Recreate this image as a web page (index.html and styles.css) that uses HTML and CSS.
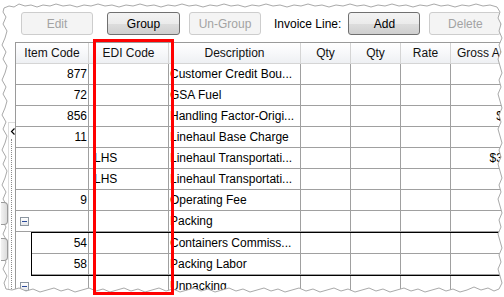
FILE: index.html
```html
<!DOCTYPE html>
<html lang="en">
<head>
    <meta charset="UTF-8">
    <title>Invoice Lines</title>
    <link rel="stylesheet" href="styles.css">
</head>
<body>
    <div class="shot">
        <div class="toolbar">
            <button class="btn btn-edit" disabled>Edit</button>
            <button class="btn btn-group">Group</button>
            <button class="btn btn-ungroup" disabled>Un-Group</button>
            <span class="toolbar-label">Invoice Line:</span>
            <button class="btn btn-add">Add</button>
            <button class="btn btn-delete" disabled>Delete</button>
        </div>

        <div class="main">
            <div class="side">
                <span class="handle handle-first"></span>
                <span class="handle"></span>
            </div>
            <div class="splitter">
                <svg class="arrow" width="6" height="7" viewBox="0 0 6 7"><polyline points="4.5,0.5 1.5,3.5 4.5,6.5" fill="none" stroke="#000" stroke-width="1.2"/></svg>
                <span class="dots"></span>
            </div>

            <div class="grid">
                <div class="row head">
                    <div class="cell">Item Code</div>
                    <div class="cell">EDI Code</div>
                    <div class="cell">Description</div>
                    <div class="cell">Qty</div>
                    <div class="cell">Qty</div>
                    <div class="cell">Rate</div>
                    <div class="cell gross-head">Gross Amount</div>
                </div>
                <div class="row">
                    <div class="cell num">877</div><div class="cell edi"></div><div class="cell desc">Customer Credit Bou...</div>
                    <div class="cell"></div><div class="cell"></div><div class="cell"></div><div class="cell num"></div>
                </div>
                <div class="row">
                    <div class="cell num">72</div><div class="cell edi"></div><div class="cell desc">GSA Fuel</div>
                    <div class="cell"></div><div class="cell"></div><div class="cell"></div><div class="cell num"></div>
                </div>
                <div class="row">
                    <div class="cell num">856</div><div class="cell edi"></div><div class="cell desc">Handling Factor-Origi...</div>
                    <div class="cell"></div><div class="cell"></div><div class="cell"></div><div class="cell num">$14.25</div>
                </div>
                <div class="row">
                    <div class="cell num">11</div><div class="cell edi"></div><div class="cell desc">Linehaul Base Charge</div>
                    <div class="cell"></div><div class="cell"></div><div class="cell"></div><div class="cell num"></div>
                </div>
                <div class="row">
                    <div class="cell num"></div><div class="cell edi">LHS</div><div class="cell desc">Linehaul Transportati...</div>
                    <div class="cell"></div><div class="cell"></div><div class="cell"></div><div class="cell num">$350.00</div>
                </div>
                <div class="row">
                    <div class="cell num"></div><div class="cell edi">LHS</div><div class="cell desc">Linehaul Transportati...</div>
                    <div class="cell"></div><div class="cell"></div><div class="cell"></div><div class="cell num"></div>
                </div>
                <div class="row">
                    <div class="cell num">9</div><div class="cell edi"></div><div class="cell desc">Operating Fee</div>
                    <div class="cell"></div><div class="cell"></div><div class="cell"></div><div class="cell num"></div>
                </div>
                <div class="row group">
                    <div class="cell"><span class="toggle"></span></div><div class="cell edi"></div><div class="cell desc">Packing</div>
                    <div class="cell"></div><div class="cell"></div><div class="cell"></div><div class="cell num"></div>
                </div>
                <div class="children">
                    <div class="row child">
                        <div class="cell num">54</div><div class="cell edi"></div><div class="cell desc">Containers Commiss...</div>
                        <div class="cell"></div><div class="cell"></div><div class="cell"></div><div class="cell num"></div>
                    </div>
                    <div class="row child">
                        <div class="cell num">58</div><div class="cell edi"></div><div class="cell desc">Packing Labor</div>
                        <div class="cell"></div><div class="cell"></div><div class="cell"></div><div class="cell num"></div>
                    </div>
                </div>
                <div class="row group">
                    <div class="cell"><span class="toggle"></span></div><div class="cell edi"></div><div class="cell desc">Unpacking</div>
                    <div class="cell"></div><div class="cell"></div><div class="cell"></div><div class="cell num"></div>
                </div>
            </div>
        </div>

        <!-- torn paper edge of the screenshot -->
        <svg class="torn" width="504" height="297" viewBox="0 0 504 297">
            <path fill="#fff" fill-rule="evenodd" d="M0 0H504V297H0Z M4 8 L9 6 L14 7 L19 4 L25 6 L31 5 L37 7 L43 5 L50 6 L56 4 L63 6 L70 5 L77 7 L84 5 L91 6 L98 4 L105 6 L112 5 L119 7 L126 5 L133 6 L140 4 L147 6 L154 5 L161 7 L168 5 L175 6 L182 4 L189 6 L196 5 L203 7 L210 5 L217 6 L224 4 L231 6 L238 5 L245 7 L252 5 L259 6 L266 4 L273 6 L280 5 L287 7 L294 5 L301 6 L308 4 L315 6 L322 5 L329 7 L336 5 L343 6 L350 4 L357 6 L364 5 L371 7 L378 5 L385 6 L392 4 L399 6 L406 5 L413 7 L420 5 L427 6 L434 4 L441 6 L448 5 L455 7 L462 5 L469 6 L476 4 L483 6 L490 5 L497 7 L500 12 L498 18 L501 24 L499 31 L502 38 L499 45 L501 52 L498 59 L500 66 L502 73 L499 80 L501 87 L498 94 L500 101 L502 108 L499 115 L501 122 L498 129 L500 136 L502 143 L499 150 L501 157 L498 164 L500 171 L502 178 L499 185 L501 192 L498 199 L500 206 L502 213 L499 220 L501 227 L498 234 L500 241 L502 248 L499 255 L501 262 L498 269 L500 276 L502 283 L499 289 L494 291 L488 288 L481 290 L474 287 L467 290 L460 292 L453 289 L446 291 L439 288 L432 290 L425 292 L418 289 L411 291 L404 288 L397 290 L390 292 L383 289 L376 291 L369 288 L362 290 L355 292 L348 289 L341 291 L334 288 L327 290 L320 292 L313 289 L306 291 L299 288 L292 290 L285 292 L278 289 L271 291 L264 288 L257 290 L250 292 L243 289 L236 291 L229 288 L222 290 L215 292 L208 289 L201 291 L194 288 L187 290 L180 292 L173 289 L166 291 L159 288 L152 290 L145 292 L138 289 L131 291 L124 288 L117 290 L110 292 L103 289 L96 291 L89 288 L82 290 L75 292 L68 289 L61 291 L54 288 L47 290 L40 292 L33 289 L26 291 L19 288 L12 290 L6 289 L4 283 L7 276 L3 269 L6 262 L2 255 L5 248 L7 241 L3 234 L6 227 L2 220 L5 213 L7 206 L3 199 L6 192 L2 185 L5 178 L7 171 L3 164 L6 157 L2 150 L5 143 L7 136 L3 129 L6 122 L2 115 L5 108 L7 101 L3 94 L6 87 L2 80 L5 73 L7 66 L3 59 L6 52 L2 45 L5 38 L7 31 L3 24 L6 17 L3 12 Z"/>
            <path fill="none" stroke="#a9a9a9" stroke-width="1" d="M4 8 L9 6 L14 7 L19 4 L25 6 L31 5 L37 7 L43 5 L50 6 L56 4 L63 6 L70 5 L77 7 L84 5 L91 6 L98 4 L105 6 L112 5 L119 7 L126 5 L133 6 L140 4 L147 6 L154 5 L161 7 L168 5 L175 6 L182 4 L189 6 L196 5 L203 7 L210 5 L217 6 L224 4 L231 6 L238 5 L245 7 L252 5 L259 6 L266 4 L273 6 L280 5 L287 7 L294 5 L301 6 L308 4 L315 6 L322 5 L329 7 L336 5 L343 6 L350 4 L357 6 L364 5 L371 7 L378 5 L385 6 L392 4 L399 6 L406 5 L413 7 L420 5 L427 6 L434 4 L441 6 L448 5 L455 7 L462 5 L469 6 L476 4 L483 6 L490 5 L497 7 L500 12 L498 18 L501 24 L499 31 L502 38 L499 45 L501 52 L498 59 L500 66 L502 73 L499 80 L501 87 L498 94 L500 101 L502 108 L499 115 L501 122 L498 129 L500 136 L502 143 L499 150 L501 157 L498 164 L500 171 L502 178 L499 185 L501 192 L498 199 L500 206 L502 213 L499 220 L501 227 L498 234 L500 241 L502 248 L499 255 L501 262 L498 269 L500 276 L502 283 L499 289 L494 291 L488 288 L481 290 L474 287 L467 290 L460 292 L453 289 L446 291 L439 288 L432 290 L425 292 L418 289 L411 291 L404 288 L397 290 L390 292 L383 289 L376 291 L369 288 L362 290 L355 292 L348 289 L341 291 L334 288 L327 290 L320 292 L313 289 L306 291 L299 288 L292 290 L285 292 L278 289 L271 291 L264 288 L257 290 L250 292 L243 289 L236 291 L229 288 L222 290 L215 292 L208 289 L201 291 L194 288 L187 290 L180 292 L173 289 L166 291 L159 288 L152 290 L145 292 L138 289 L131 291 L124 288 L117 290 L110 292 L103 289 L96 291 L89 288 L82 290 L75 292 L68 289 L61 291 L54 288 L47 290 L40 292 L33 289 L26 291 L19 288 L12 290 L6 289 L4 283 L7 276 L3 269 L6 262 L2 255 L5 248 L7 241 L3 234 L6 227 L2 220 L5 213 L7 206 L3 199 L6 192 L2 185 L5 178 L7 171 L3 164 L6 157 L2 150 L5 143 L7 136 L3 129 L6 122 L2 115 L5 108 L7 101 L3 94 L6 87 L2 80 L5 73 L7 66 L3 59 L6 52 L2 45 L5 38 L7 31 L3 24 L6 17 L3 12 Z"/>
        </svg>

        <div class="highlight"></div>
    </div>
</body>
</html>
```

FILE: styles.css
```css
body {
    margin: 0;
    background-color: #fff;
    font-family: "Liberation Sans", Arial, sans-serif;
    font-size: 12px;
    color: #000;
}
.shot {
    position: relative;
    width: 504px;
    height: 297px;
    overflow: hidden;
}

/* toolbar */
.toolbar {
    display: flex;
    align-items: center;
    height: 23px;
    padding: 12px 0 0 21px;
}
.btn {
    width: 72px;
    height: 23px;
    padding: 0;
    font-family: inherit;
    font-size: 12px;
    border-radius: 3px;
    border: 1px solid #707070;
    background: linear-gradient(#f3f3f3, #ebebeb 50%, #dddddd 51%, #cfcfcf);
    color: #000;
}
.btn:disabled {
    border-color: #cdcdcd;
    background: #f4f4f4;
    color: #a3a3a3;
}
.btn-group {
    margin-left: 14px;
    width: 73px;
}
.btn-ungroup {
    margin-left: 9px;
}
.toolbar-label {
    margin-left: 13px;
    margin-right: 7px;
}
.btn-delete {
    margin-left: 9px;
}

/* grid area */
.main {
    display: flex;
    margin-top: 7px;
}
.side {
    position: relative;
    z-index: 3;
    display: flex;
    flex-direction: column;
    width: 11px;
    padding-left: 1px;
}
.handle {
    display: block;
    width: 6px;
    height: 21px;
    border: 1px solid #9a9a9a;
    border-left: none;
    border-radius: 0 4px 4px 0;
    background: linear-gradient(90deg, #f2f2f2, #dcdcdc);
}
.handle-first {
    margin-top: 160px;
    margin-bottom: 13px;
}
.splitter {
    display: flex;
    flex-direction: column;
    width: 6px;
    margin-top: 80px;
    border-left: 1px solid #dcdcdc;
    border-top: 1px solid #dcdcdc;
}
.arrow {
    display: block;
    margin: 5px 0 0 1px;
}
.dots {
    display: block;
    flex: 1;
    height: 200px;
    margin: 4px 0 0 2px;
    border-left: 1px dotted #8a8a8a;
}

.grid {
    flex: none;
    border-left: 1px solid #9a9a9a;
    border-top: 1px solid #9a9a9a;
}
.row {
    display: grid;
    grid-template-columns: 73px 80px 132px 50px 50px 50px 84px;
    height: 21px;
    border-bottom: 1px solid #a0a0a0;
    box-sizing: border-box;
}
.cell {
    line-height: 20px;
    border-right: 1px solid #a0a0a0;
    white-space: nowrap;
    overflow: hidden;
}
.head {
    background: linear-gradient(#ffffff, #f7f8fa 50%, #eef0f3);
    border-bottom-color: #d5d5d5;
}
.head .cell {
    text-align: center;
    border-right-color: #d5d5d5;
    color: #111;
}
.head .gross-head {
    text-align: left;
    padding-left: 6px;
}
.num {
    text-align: right;
    padding-right: 1px;
}
.edi {
    padding-left: 5px;
}
.desc {
    padding-left: 1px;
}

.group .cell:first-child {
    display: flex;
    align-items: center;
    padding-left: 4px;
}
.toggle {
    position: relative;
    width: 7px;
    height: 7px;
    border: 1px solid #8c96a0;
    background: linear-gradient(#ffffff, #e4e6ea);
}
.toggle::after {
    content: "";
    position: absolute;
    left: 1px;
    top: 3px;
    width: 5px;
    height: 1px;
    background-color: #2a4a9a;
}

.children {
    margin-left: 15px;
    border: 1px solid #000;
    border-right: none;
}
.child {
    grid-template-columns: 57px 80px 132px 50px 50px 50px 84px;
}

/* annotation overlays */
.torn {
    position: absolute;
    left: 0;
    top: 0;
    z-index: 2;
}
.highlight {
    position: absolute;
    z-index: 4;
    left: 93px;
    top: 39px;
    width: 81px;
    height: 256px;
    border: 3px solid #f00;
    box-sizing: border-box;
}
```
